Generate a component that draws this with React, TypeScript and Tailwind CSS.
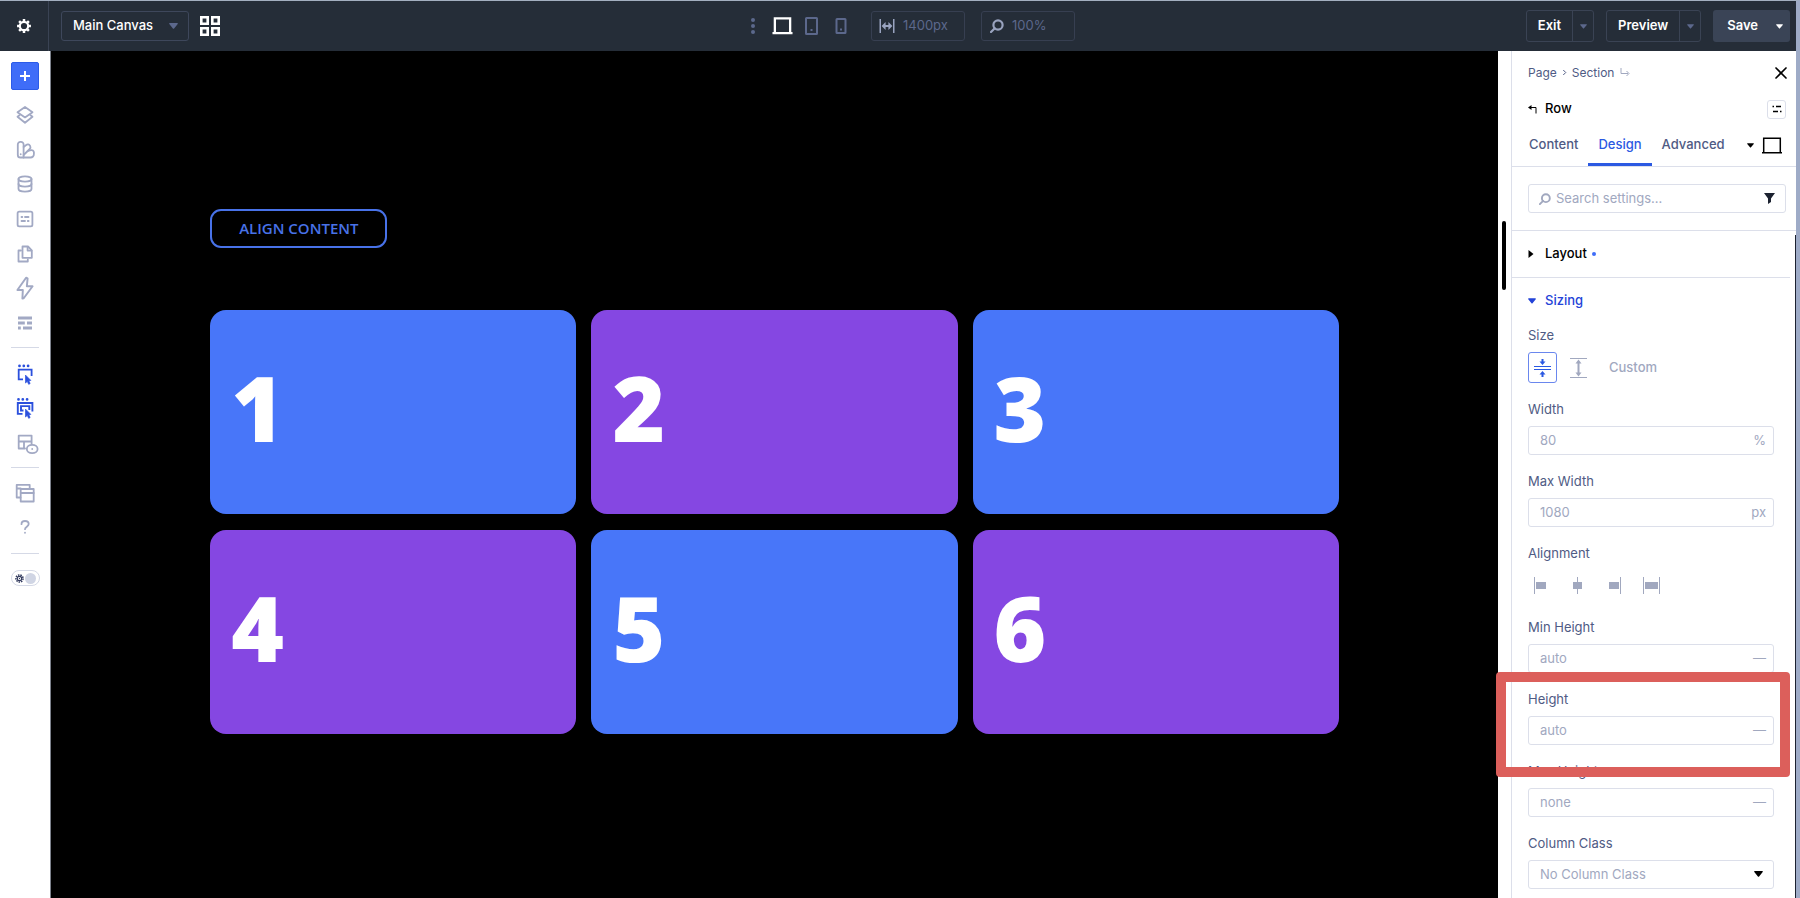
import type { ReactNode } from 'react'
import { X } from 'lucide-react'

const CARDS = [1, 2, 3, 4, 5, 6]

function Caret({ className }: { className: string }) {
  return (
    <svg viewBox="0 0 9 6" className={className} fill="currentColor">
      <path d="M0.8 0h7.4c.6 0 .9.7.5 1.1L5.1 5.4a.8.8 0 0 1-1.2 0L.3 1.1C-.1.7.2 0 .8 0z" />
    </svg>
  )
}

function Laptop({ className }: { className: string }) {
  return (
    <svg viewBox="0 0 22 20" className={className} fill="none" stroke="currentColor" strokeWidth="2.4">
      <path d="M3 17V2h16v15M0.5 17.5h21" />
    </svg>
  )
}

function SearchIcon({ className }: { className: string }) {
  return (
    <svg viewBox="0 0 14 14" className={className} fill="none" stroke="currentColor" strokeWidth="2.2">
      <circle cx="8" cy="6" r="4.6" />
      <path d="M4.8 9.2L1 13" strokeLinecap="round" />
    </svg>
  )
}

function RailIcon({ label, className, children }: { label: string; className?: string; children: ReactNode }) {
  return (
    <button type="button" aria-label={label} className="flex h-[34px] w-full items-center justify-center">
      <svg
        viewBox="0 0 24 24"
        className={className ?? 'h-6 w-6 text-[#a2a9c4]'}
        fill="none"
        stroke="currentColor"
        strokeWidth="1.8"
        strokeLinejoin="round"
        strokeLinecap="round"
      >
        {children}
      </svg>
    </button>
  )
}

function Rail() {
  return (
    <nav className="flex w-[51px] shrink-0 flex-col items-center border-r border-[#7d828c] bg-white pt-[11px]">
      <button
        type="button"
        aria-label="Add"
        className="flex h-[28px] w-[28px] items-center justify-center rounded-[2px] border border-[#2b5be8] bg-[#3f6df8] text-white"
      >
        <svg viewBox="0 0 12 12" className="h-3 w-3" stroke="currentColor" strokeWidth="2">
          <path d="M6 1v10M1 6h10" />
        </svg>
      </button>
      <div className="mt-2 flex h-[242px] w-full flex-col justify-between">
        <RailIcon label="Layers">
          <path d="M12 4l7.5 5.2L12 14.400 4.500 9.200z" />
          <path d="M6.500 12.200l-2 1.600L12 19.800l7.500-6-2-1.600" />
        </RailIcon>
        <RailIcon label="Styles">
          <path d="M4.800 6.500a2.600 2.600 0 0 1 2.600-2.600h.6a2.600 2.600 0 0 1 2.600 2.600v13H7.400a2.600 2.600 0 0 1-2.600-2.600z" />
          <path d="M10.600 9l2.600-2a2.400 2.400 0 0 1 3.700.6l.3.600c.5 1 .3 2.100-.5 2.800L10.600 17" />
          <path d="M15 13l3-.8a2.400 2.400 0 0 1 2.900 1.900v2a3.300 3.300 0 0 1-3.300 3.400h-7" />
          <path d="M7.700 16.200v.1" />
        </RailIcon>
        <RailIcon label="Data">
          <ellipse cx="12" cy="7" rx="6.500" ry="2.700" />
          <path d="M5.500 7v10c0 1.500 2.900 2.700 6.500 2.700s6.500-1.200 6.500-2.700V7" />
          <path d="M5.500 12c0 1.500 2.900 2.700 6.500 2.700s6.500-1.200 6.500-2.700" />
        </RailIcon>
        <RailIcon label="Variables">
          <rect x="4.600" y="4.600" width="14.800" height="14.800" rx="1.600" />
          <path d="M8.500 10h.8M12 10h3.500M8.500 14h3.500M14.800 14h.8" />
        </RailIcon>
        <RailIcon label="Pages">
          <path d="M9.500 4.500h5.500l3.800 3.800v7.500h-9.300z" />
          <path d="M14.600 4.800v3.800h3.800" />
          <path d="M8 8.500H5.500v11h9.300V17.500" />
        </RailIcon>
        <RailIcon label="Interactions" className="h-[26px] w-[26px] text-[#a2a9c4]">
          <path d="M13 2.500L5 13.800h5L9.600 21.800l1.200-.3L19 10.400h-5.300l.7-7.300z" />
        </RailIcon>
        <RailIcon label="Wireframe">
          <path
            strokeWidth="2.800"
            strokeLinecap="butt"
            d="M5 7h14M5 12h6.800M14 12h5M5 17h2.800M10 17h9"
          />
        </RailIcon>
      </div>
      <div className="mt-[7px] h-px w-7 bg-[#d5d9e6]" />
      <div className="mt-[9px] flex w-full flex-col">
        <RailIcon label="Select element" className="h-6 w-6 text-[#2b50dd]">
          <path d="M6.500 3.800v.1M10.800 3.800v.1M15.100 3.800v.1" strokeWidth="2.700" />
          <path d="M10 17.300H5.700V7.700h12.900V14" strokeLinecap="butt" strokeLinejoin="miter" />
          <path d="M12.800 13.400l5 5-2.100.2 1.400 2.900-1.400.8-1.400-3-1.500 1.400z" fill="currentColor" strokeWidth="0.800" />
        </RailIcon>
        <RailIcon label="Select parent" className="h-6 w-6 text-[#2b50dd]">
          <path d="M5.500 3.300v.1M9.800 3.300v.1M14.100 3.300v.1" strokeWidth="2.700" />
          <path d="M9.500 17.900H4.800V7h14.600v8.500M10.500 14.500H8v-4.400h8.300v4" strokeWidth="1.900" strokeLinecap="butt" strokeLinejoin="miter" />
          <path d="M12.800 13.400l5 5-2.100.2 1.400 2.900-1.400.8-1.400-3-1.500 1.400z" fill="currentColor" strokeWidth="0.800" />
        </RailIcon>
        <RailIcon label="Preview grid" className="h-6 w-6 overflow-visible text-[#a2a9c4]">
          <path d="M12 18.500H5.700V5.600h12.900V14M5.700 11.500h12.900M11 11.500v7" />
          <ellipse cx="19.200" cy="19" rx="5.400" ry="4.200" fill="white" />
          <path d="M19.200 19v.1" />
        </RailIcon>
      </div>
      <div className="mt-2 h-px w-7 bg-[#d5d9e6]" />
      <div className="mt-2 flex w-full flex-col">
        <RailIcon label="Templates">
          <path d="M7.500 16.500H3.700V3.800h13v3.500M3.700 7.500h4" />
          <rect x="7.700" y="8" width="13" height="12.500" />
          <path d="M7.700 12h13" />
        </RailIcon>
        <RailIcon label="Help">
          <path d="M8.500 9.200C8.500 7.200 10 6 12 6s3.700 1.200 3.700 3.100c0 2.500-3.700 2.700-3.700 5.100M12 17.700v.1" />
        </RailIcon>
      </div>
      <div className="mt-[9px] h-px w-7 bg-[#d5d9e6]" />
      <label className="mt-4 flex h-4 w-[29px] items-center justify-between rounded-full border border-[#d5d9e6] px-[3px]">
        <input type="checkbox" aria-label="Dark mode" className="sr-only" />
        <svg viewBox="0 0 10 10" className="h-[9px] w-[9px] text-[#323a5e]" fill="none" stroke="currentColor">
          <circle cx="5" cy="5" r="3.900" strokeWidth="1.800" strokeDasharray="1.600 1.100" />
          <circle cx="5" cy="5" r="2.400" strokeWidth="1.200" />
          <circle cx="5" cy="5" r="0.700" fill="currentColor" stroke="none" />
        </svg>
        <span className="h-[11px] w-[11px] rounded-full bg-[#d0d5e4]" />
      </label>
    </nav>
  )
}

function SplitButton({ label }: { label: string }) {
  return (
    <div className="flex h-8 rounded-[3px] border border-[#3a4354] text-[13px] font-semibold text-white">
      <button type="button" className="px-[11px]">{label}</button>
      <button type="button" aria-label={`${label} options`} className="flex w-[21px] items-center justify-center border-l border-[#3a4354] text-[#5c688c]">
        <Caret className="h-[5px] w-[7px]" />
      </button>
    </div>
  )
}

function TopBar() {
  return (
    <header className="grid h-[50px] shrink-0 grid-cols-[1fr_auto_1fr] items-center bg-[#252d38]">
      <div className="flex h-full items-center">
        <button type="button" aria-label="Settings" className="flex h-full w-[49px] items-center justify-center border-r border-[#3a4354] text-white">
          <svg viewBox="0 0 18 18" className="h-4 w-4" fill="none" stroke="currentColor">
            <circle cx="9" cy="9" r="4.700" strokeWidth="2.400" />
            <g strokeWidth="2.800">
              <path d="M9 1.200v2.500M9 14.300v2.500M1.200 9h2.500M14.300 9h2.500M3.500 3.500l1.800 1.800M12.700 12.700l1.800 1.800M3.500 14.500l1.800-1.800M12.700 5.300l1.800-1.800" />
            </g>
          </svg>
        </button>
        <div className="relative ml-3">
          <select aria-label="Canvas" className="h-[30px] w-[128px] appearance-none rounded-[3px] border border-[#3e475b] bg-transparent pl-[11px] text-[13px] font-medium text-white">
            <option>Main Canvas</option>
          </select>
          <Caret className="pointer-events-none absolute top-3 right-[11px] h-[6px] w-[9px] text-[#5c688c]" />
        </div>
        <button type="button" aria-label="Modules" className="ml-[11px] text-white">
          <svg viewBox="0 0 20 20" className="h-5 w-5" fill="none" stroke="currentColor" strokeWidth="2.600">
            <path d="M1.300 1.300h6.400v6.400H1.300zM12.300 1.300h6.400v6.400h-6.400zM1.300 12.300h6.400v6.400H1.300zM12.300 12.300h6.400v6.400h-6.400z" />
          </svg>
        </button>
      </div>
      <div className="flex items-center pl-[30px] text-[#5c688c]">
        <button type="button" aria-label="More">
          <svg viewBox="0 0 4 16" className="h-4 w-1" fill="currentColor">
            <circle cx="2" cy="2" r="2" />
            <circle cx="2" cy="8" r="2" />
            <circle cx="2" cy="14" r="2" />
          </svg>
        </button>
        <button type="button" aria-label="Desktop" className="ml-[17px] text-white">
          <Laptop className="h-5 w-[21px]" />
        </button>
        <button type="button" aria-label="Tablet" className="ml-3">
          <svg viewBox="0 0 13 18" className="h-[18px] w-[13px]" fill="none" stroke="currentColor" strokeWidth="2">
            <rect x="1" y="1" width="11" height="16" rx="0.500" />
            <path d="M5.500 13h2" />
          </svg>
        </button>
        <button type="button" aria-label="Phone" className="ml-[17px]">
          <svg viewBox="0 0 12 18" className="h-[18px] w-3" fill="none" stroke="currentColor" strokeWidth="2">
            <rect x="1.500" y="2" width="9" height="14" rx="0.500" />
            <path d="M5 12.500h2" />
          </svg>
        </button>
        <label className="ml-6 flex h-[30px] w-[94px] items-center gap-2 rounded-[3px] border border-[#373f51] pl-[7px]">
          <svg viewBox="0 0 16 14" className="h-[14px] w-4 shrink-0 text-[#99a3bf]" fill="currentColor">
            <path d="M0.500 0h1.500v14H0.500zM14 0h1.500v14H14zM2.600 7l4-4v3h2.800V3l4 4-4 4V8H6.600v3z" />
          </svg>
          <input aria-label="Width" defaultValue="1400px" className="w-full min-w-0 bg-transparent text-[13px]" />
        </label>
        <label className="ml-4 flex h-[30px] w-[94px] items-center gap-2 rounded-[3px] border border-[#373f51] pl-2">
          <SearchIcon className="h-[14px] w-[14px] shrink-0 text-[#99a3bf]" />
          <input aria-label="Zoom" defaultValue="100%" className="w-full min-w-0 bg-transparent text-[13px]" />
        </label>
      </div>
      <div className="flex items-center justify-end gap-3 pr-[6px]">
        <SplitButton label="Exit" />
        <SplitButton label="Preview" />
        <div className="flex h-8 items-center rounded-[3px] bg-[#3a4456] text-[13px] font-semibold text-white">
          <button type="button" className="pr-[11px] pl-[14px]">Save</button>
          <button type="button" aria-label="Save options" className="flex w-[21px] justify-center">
            <Caret className="h-[5px] w-[7px]" />
          </button>
        </div>
      </div>
    </header>
  )
}

function Canvas() {
  return (
    <main className="flex min-w-0 flex-1 flex-col items-center bg-black pt-[158px] font-['Open_Sans',sans-serif]">
      <div className="w-[78%]">
        <span className="inline-flex h-[39px] items-center rounded-[11px] border-2 border-[#4872e8] px-[27px] text-[15px] font-semibold text-[#4872e8]">
          ALIGN CONTENT
        </span>
        <div className="mt-[62px] grid grid-cols-3 gap-x-[15px] gap-y-4">
          {CARDS.map((n) => (
            <div
              key={n}
              className={`flex h-[204px] items-center rounded-2xl pb-[10px] pl-[21px] text-[90px] leading-none font-extrabold text-white ${n % 2 ? 'bg-[#4876f9]' : 'bg-[#8547e2]'}`}
            >
              {n}
            </div>
          ))}
        </div>
      </div>
    </main>
  )
}

function Field({ label, placeholder, unit }: { label: string; placeholder: string; unit: string }) {
  return (
    <label className="flex flex-col gap-[7px]">
      <span className="h-5 text-[13px] leading-5">{label}</span>
      <span className="flex h-[29px] items-center rounded-[3px] border border-[#dcdfea] pr-[7px] pl-[11px] text-[13px] text-[#a1a8bf]">
        <input placeholder={placeholder} className="w-full min-w-0 bg-transparent placeholder:text-[#a1a8bf]" />
        <span>{unit}</span>
      </span>
    </label>
  )
}

const ALIGNMENTS = [
  { label: 'Left', d: 'M2 0h1v17H2zM4 5h10v7H4z' },
  { label: 'Center', d: 'M8 0h1v17H8zM4 5h9v7H4z' },
  { label: 'Right', d: 'M14 0h1v17h-1zM3 5h10v7H3z' },
  { label: 'Stretch', d: 'M0 0h1v17H0zM16 0h1v17h-1zM2 5h13v7H2z' },
]

function SettingsPanel() {
  return (
    <aside className="relative flex w-[298px] shrink-0 bg-white pl-[13px] text-[#4f5b84]">
      <div className="absolute top-[170px] left-[4px] h-[69px] w-1 rounded-full bg-black" />
      <div className="absolute top-[184px] right-0 bottom-0 w-px bg-[#1c2230]" />
      <div className="flex min-w-0 flex-1 flex-col border-l border-[#dcdfea]">
        <div className="flex h-[43px] items-center pr-[5px] pl-4 text-xs">
          <a href="#page">Page</a>
          <svg viewBox="0 0 6 8" className="mx-[5px] h-[7px] w-[5px]" fill="none" stroke="currentColor" strokeWidth="1.200">
            <path d="M1.500 1l3 3-3 3" />
          </svg>
          <a href="#section">Section</a>
          <svg viewBox="0 0 10 9" className="ml-[6px] h-[9px] w-[10px] text-[#a1a8bf]" fill="none" stroke="currentColor">
            <path d="M1 0v5.500h7M6.500 3l2.500 2.500L6.500 8" />
          </svg>
          <button type="button" aria-label="Close" className="ml-auto text-black">
            <X className="h-5 w-5" strokeWidth={2} />
          </button>
        </div>
        <div className="flex h-[30px] items-center pr-[10px] pl-4 text-[13px] font-medium text-black">
          <svg viewBox="0 0 9 9" className="h-[9px] w-[9px]" fill="none" stroke="currentColor">
            <path d="M2 2.500h6v6" />
            <path d="M0 2.500L3.500 0v5z" fill="currentColor" stroke="none" />
          </svg>
          <span className="ml-2">Row</span>
          <button type="button" aria-label="Presets" className="ml-auto flex h-[19px] w-[19px] items-center justify-center rounded-[3px] border border-[#dcdfea]">
            <svg viewBox="0 0 10 8" className="h-2 w-[10px]" stroke="currentColor" strokeWidth="1.600">
              <path d="M0.500 1.500h1.500M4 1.500h5M1 6.500h5M8 6.500h1.500" />
            </svg>
          </button>
        </div>
        <div className="flex h-[43px] items-stretch border-b border-[#dcdfea] pr-[14px] pl-[7px] text-[13px] font-medium">
          <button type="button" className="px-[10px] pb-px">Content</button>
          <button type="button" className="border-b-[3px] border-[#2b59e2] px-[10px] pt-[2px] text-[#2b59e2]">Design</button>
          <button type="button" className="px-[10px] pb-px">Advanced</button>
          <button type="button" aria-label="Breakpoint" className="ml-auto flex items-center gap-2 text-black">
            <Caret className="h-[5px] w-[7px]" />
            <svg viewBox="0 0 20 17" className="h-[17px] w-5" fill="none" stroke="currentColor" strokeWidth="1.500">
              <path d="M1.700 15V1.200h16.600V15M0 15.800h20" />
            </svg>
          </button>
        </div>
        <div className="flex h-16 items-center border-b border-[#dcdfea] pr-[10px] pl-4">
          <label className="flex h-[29px] flex-1 items-center gap-[5px] rounded-[3px] border border-[#dcdfea] px-[10px] text-[13px]">
            <SearchIcon className="h-3 w-3 shrink-0 text-[#a1a8bf]" />
            <input placeholder="Search settings..." className="w-full min-w-0 placeholder:text-[#a1a8bf]" />
            <svg viewBox="0 0 11 11" className="h-[11px] w-[11px] shrink-0 text-[#1c2230]" fill="currentColor">
              <path d="M0 0h11L7 5.500V9l-3 2V5.500z" />
            </svg>
          </label>
        </div>
        <div className="mr-[6px] flex h-[47px] items-center border-b border-[#dcdfea] pl-4 text-black">
          <svg viewBox="0 0 6 8" className="h-2 w-[6px]" fill="currentColor">
            <path d="M0.500 0l5 4-5 4z" />
          </svg>
          <button type="button" className="ml-[11px] text-[13px] font-medium">Layout</button>
          <span className="ml-[5px] h-1 w-1 rounded-full bg-[#3f6df8]" />
        </div>
        <div className="flex h-[46px] items-center pl-4 text-[#2343d8]">
          <Caret className="h-[6px] w-2" />
          <button type="button" className="ml-[9px] text-[13px] font-medium">Sizing</button>
        </div>
        <div className="mt-px flex flex-col gap-4 pr-[22px] pl-4">
          <div className="flex flex-col gap-[7px]">
            <span className="h-5 text-[13px] leading-5">Size</span>
            <div className="flex h-[31px] items-center text-[#a1a8bf]">
              <button type="button" aria-label="Fit" className="flex h-[31px] w-[29px] items-center justify-center rounded-[3px] border border-[#6a87ee] text-[#2b59e2]">
                <svg viewBox="0 0 17 20" className="h-5 w-[17px]" fill="currentColor">
                  <path d="M0 8h17v1H0zM0 11h17v1H0zM7.500 1h2v2.500h2L8.500 7 5.500 3.500h2zM7.500 19h2v-2.500h2L8.500 13l-3 3.500h2z" />
                </svg>
              </button>
              <button type="button" aria-label="Fill" className="ml-[13px]">
                <svg viewBox="0 0 17 20" className="h-5 w-[17px]" fill="currentColor">
                  <path d="M0 0h17v1H0zM0 19h17v1H0zM8.500 1.500l3 4h-2v9h2l-3 4-3-4h2v-9h-2z" />
                </svg>
              </button>
              <button type="button" className="ml-[22px] text-[13px] font-medium">Custom</button>
            </div>
          </div>
          <Field label="Width" placeholder="80" unit="%" />
          <Field label="Max Width" placeholder="1080" unit="px" />
          <div className="flex flex-col gap-[7px]">
            <span className="h-5 text-[13px] leading-5">Alignment</span>
            <div className="flex h-[31px] items-center gap-5 pl-1 text-[#a1a8bf]">
              {ALIGNMENTS.map((a) => (
                <button key={a.label} type="button" aria-label={a.label}>
                  <svg viewBox="0 0 17 17" className="h-[17px] w-[17px]" fill="currentColor">
                    <path d={a.d} />
                  </svg>
                </button>
              ))}
            </div>
          </div>
          <Field label="Min Height" placeholder="auto" unit="—" />
          <div className="relative">
            <Field label="Height" placeholder="auto" unit="—" />
            {/* callout frame */}
            <div className="pointer-events-none absolute -top-[17px] -right-4 -bottom-8 -left-8 z-10 rounded-[4px] border-[10px] border-[#dc5f5b]" />
          </div>
          <Field label="Max Height" placeholder="none" unit="—" />
          <label className="relative flex flex-col gap-[7px]">
            <span className="h-5 text-[13px] leading-5">Column Class</span>
            <select className="h-[29px] w-full appearance-none rounded-[3px] border border-[#dcdfea] pl-[11px] text-[13px] text-[#a1a8bf]">
              <option>No Column Class</option>
            </select>
            <Caret className="pointer-events-none absolute right-[11px] bottom-3 h-[6px] w-[9px] text-black" />
          </label>
        </div>
      </div>
    </aside>
  )
}

export default function App() {
  return (
    <div className="flex h-screen flex-col overflow-hidden border-t border-r-4 border-t-[#a3afc0] border-r-[#9eabc7] bg-white font-['Inter',sans-serif]">
      <TopBar />
      <div className="flex min-h-0 flex-1">
        <Rail />
        <Canvas />
        <SettingsPanel />
      </div>
    </div>
  )
}
